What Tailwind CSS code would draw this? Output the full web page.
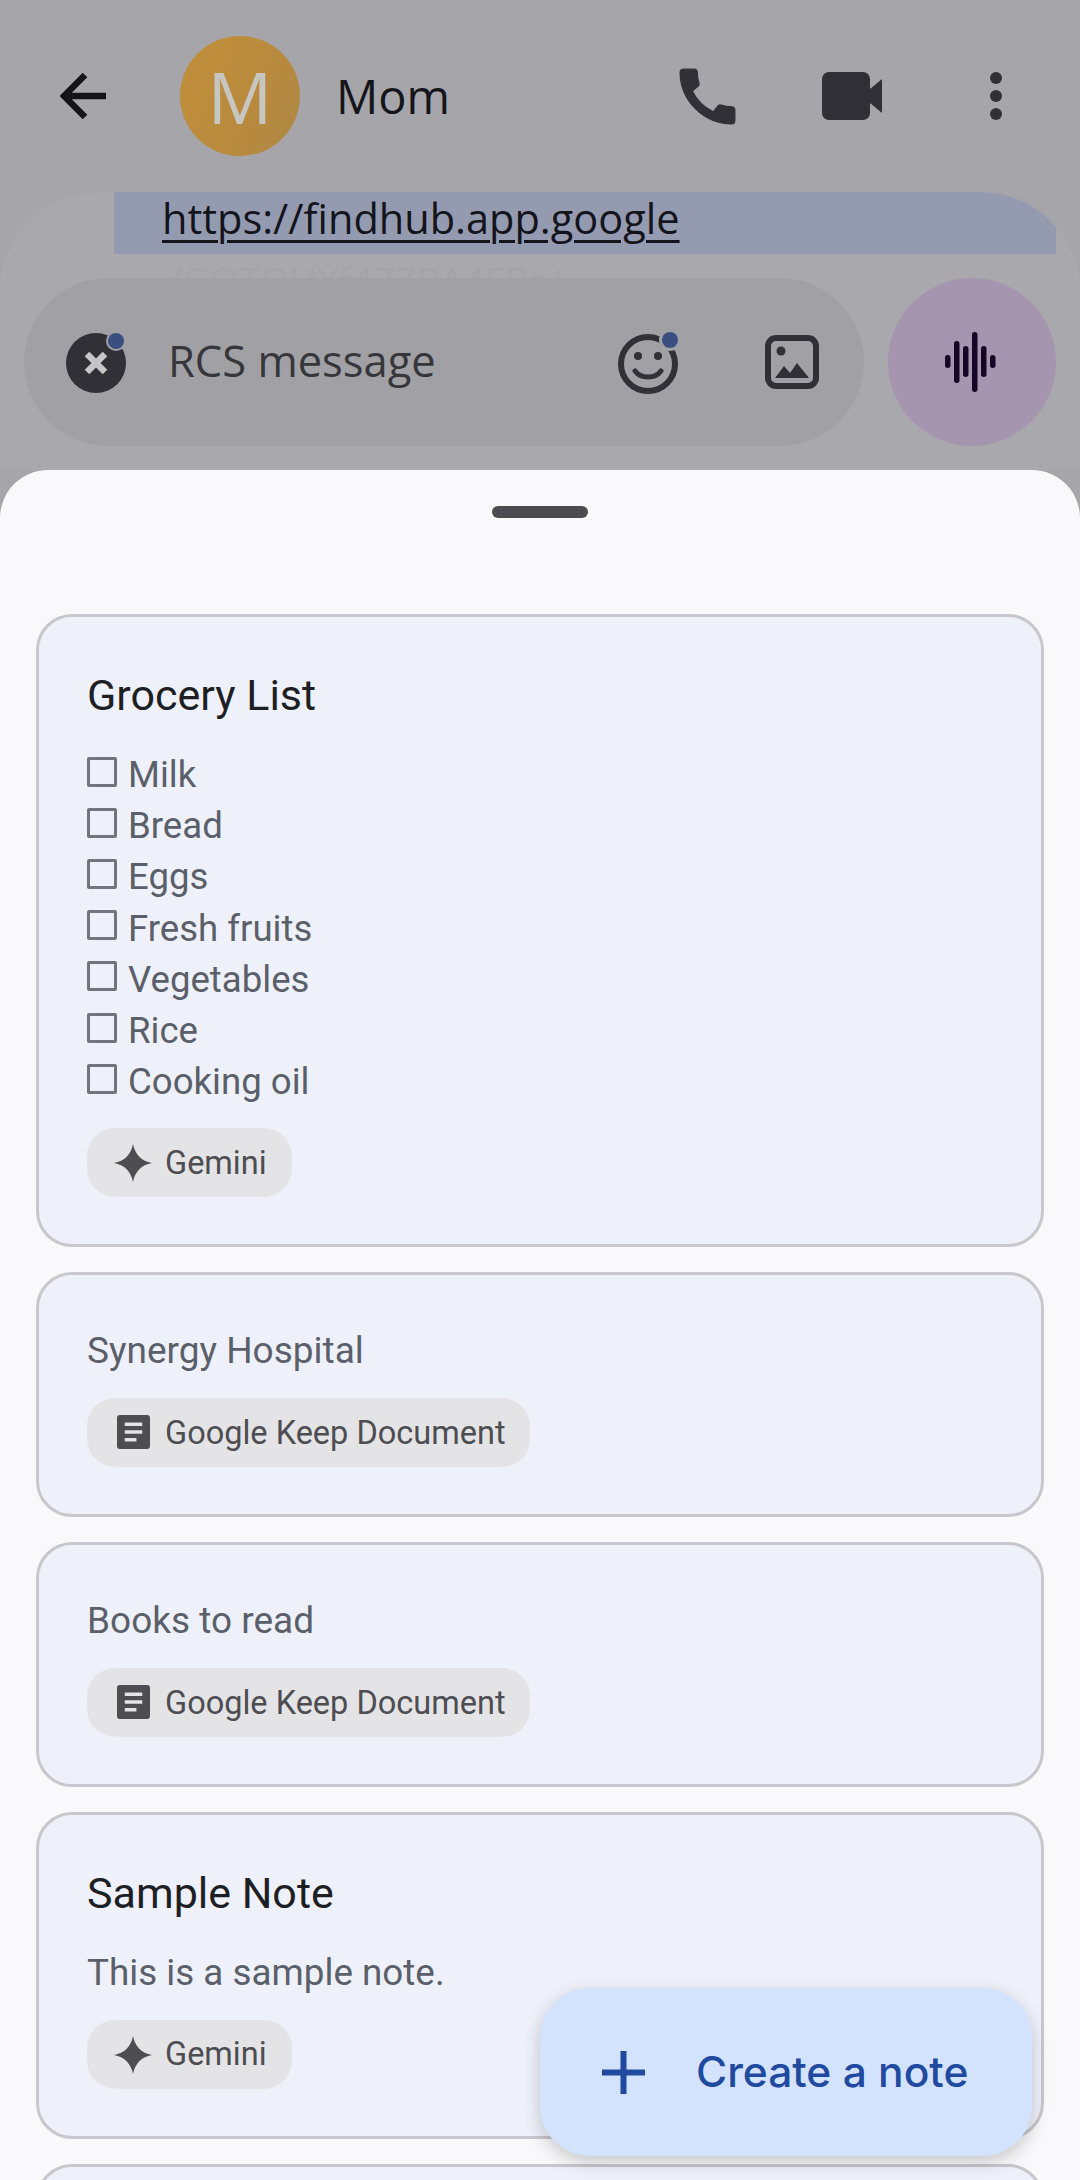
<!DOCTYPE html>
<html>
<head>
<meta charset="utf-8">
<script src="https://cdn.jsdelivr.net/npm/@tailwindcss/browser@4"></script>
</head>
<body class="m-0">
<div class="relative w-[1080px] h-[2180px] overflow-hidden bg-[#a6a6aa] font-['Roboto',sans-serif]">
  <!-- app bar -->
  <header class="flex items-center h-[192px] pl-[60px] pr-[78px]">
    <svg class="w-[46px] h-[48px]" viewBox="0 0 46 48" fill="none" stroke="#141419" stroke-width="6.5"><path d="M46 24H5M25 3 4 24l21 21"/></svg>
    <div class="ml-[74px] w-[120px] h-[120px] rounded-full bg-[linear-gradient(115deg,#c08f3a,#b98a3e_60%,#ad8845)] flex items-center justify-center text-[72px] leading-none text-[#c6c6c2] font-['Open_Sans',sans-serif]">M</div>
    <div class="ml-[36px] flex-1 text-[47px] leading-none text-[#15151a] font-['Open_Sans',sans-serif]">Mom</div>
    <svg class="w-[73px] h-[73px] mr-[78px]" viewBox="0 0 24 24" fill="#303036" stroke="#303036" stroke-width="0.4"><path d="M20.01 15.38c-1.23 0-2.42-.2-3.53-.56-.35-.12-.74-.03-1.01.24l-1.57 1.97c-2.83-1.35-5.48-3.9-6.89-6.83l1.95-1.66c.27-.28.35-.67.24-1.02-.37-1.11-.56-2.3-.56-3.53 0-.54-.45-.99-.99-.99H4.19C3.65 3 3 3.24 3 3.99 3 13.28 10.73 21 20.01 21c.71 0 .99-.63.99-1.18v-3.45c0-.54-.45-.99-.99-.99z"/></svg>
    <svg class="w-[60px] h-[48px] mr-[108px]" viewBox="0 0 60 48" fill="#303036"><rect width="48" height="48" rx="7"/><path d="M48 17 60 7v34L48 31z"/></svg>
    <svg class="w-[12px] h-[48px]" viewBox="0 0 12 48" fill="#303036"><circle cx="6" cy="6" r="6"/><circle cx="6" cy="24" r="6"/><circle cx="6" cy="42" r="6"/></svg>
  </header>
  <!-- message bubble -->
  <div class="h-[278px] rounded-t-[100px] bg-[#a9a9ad] pl-[114px] pr-[24px] overflow-hidden">
    <div class="h-[62px] bg-[#949bb0] pl-[48px] text-[41.500px] leading-[53px] text-[#14141c] font-['Open_Sans',sans-serif]"><span class="underline decoration-[3px] underline-offset-[6px]">https://findhub.app.google</span></div>
    <div class="pl-[54px] text-[38px] leading-[44px] mt-[5px] text-[#a4a4a8] whitespace-nowrap font-['Open_Sans',sans-serif]">/GOTQUYf47ZPA4FRa/</div>
  </div>
  <!-- composer -->
  <div class="flex gap-[24px] px-[24px] -mt-[192px]">
    <div class="w-[840px] h-[168px] rounded-full bg-[#a1a1a5] flex items-center pl-[42px]">
      <svg class="w-[62px] h-[62px] shrink-0" viewBox="0 0 62 62"><circle cx="30" cy="32" r="30" fill="#303036"/><path d="M21 23l18 18M39 23 21 41" stroke="#c6c6c8" stroke-width="6.500"/><circle cx="50" cy="10" r="10" fill="#a1a1a5"/><circle cx="50" cy="10" r="8" fill="#3a4f80"/></svg>
      <div class="ml-[40px] -mt-[2px] flex-1 text-[43.500px] leading-none text-[#36363b] font-['Open_Sans',sans-serif]">RCS message</div>
      <svg class="w-[64px] h-[64px] shrink-0 mr-[83px]" viewBox="0 0 64 64" fill="none"><circle cx="30" cy="34" r="27" stroke="#303036" stroke-width="6"/><circle cx="20" cy="26" r="4" fill="#303036"/><circle cx="40" cy="26" r="4" fill="#303036"/><path d="M17 41c6 8 20 8 26 0" stroke="#303036" stroke-width="5" stroke-linecap="round"/><circle cx="52" cy="10" r="11" fill="#a1a1a5"/><circle cx="52" cy="10" r="8" fill="#3a4f80"/></svg>
      <svg class="w-[54px] h-[54px] shrink-0 mr-[45px]" viewBox="0 0 54 54" fill="none"><rect x="3" y="3" width="48" height="48" rx="8" stroke="#303036" stroke-width="6"/><circle cx="16" cy="16" r="4.500" fill="#303036"/><path d="M10 43l9-12 6 7 7-10 12 15z" fill="#303036"/></svg>
    </div>
    <div class="w-[168px] h-[168px] rounded-full bg-[#a595af] flex items-center justify-center">
      <svg class="w-[51px] h-[60px] mr-[3px]" viewBox="0 0 51 60" fill="#170726"><rect x="0" y="23" width="5.500" height="13" rx="2.700"/><rect x="9" y="9" width="5.500" height="42" rx="2.700"/><rect x="18" y="14" width="5.500" height="31" rx="2.700"/><rect x="27" y="0" width="5.500" height="60" rx="2.700"/><rect x="36" y="14" width="5.500" height="31" rx="2.700"/><rect x="45" y="23" width="5.500" height="13" rx="2.700"/></svg>
    </div>
  </div>
  <!-- bottom sheet -->
  <section class="mt-[24px] h-[1710px] rounded-t-[48px] bg-[#f9f9fb] px-[36px] pt-[36px]">
    <div class="w-[96px] h-[12px] mx-auto rounded-full bg-[#4b4b50]"></div>
    <div class="mt-[96px] flex flex-col gap-[25px]">
      <!-- card 1 -->
      <article class="h-[633px] rounded-[36px] border-[3px] border-[#c8c8cc] bg-[#eff1fa] px-[48px] pt-[55px]">
        <h2 class="text-[43px] leading-[47px] font-normal text-[#1d1f24]">Grocery List</h2>
        <ul class="mt-[30px] text-[36.600px] leading-[51.200px] text-[#5a5f6a]">
          <li class="flex items-center gap-[11px]"><span class="w-[30px] h-[30px] -mt-[6px] rounded-[2px] border-[3px] border-[#72757f]"></span>Milk</li>
          <li class="flex items-center gap-[11px]"><span class="w-[30px] h-[30px] -mt-[6px] rounded-[2px] border-[3px] border-[#72757f]"></span>Bread</li>
          <li class="flex items-center gap-[11px]"><span class="w-[30px] h-[30px] -mt-[6px] rounded-[2px] border-[3px] border-[#72757f]"></span>Eggs</li>
          <li class="flex items-center gap-[11px]"><span class="w-[30px] h-[30px] -mt-[6px] rounded-[2px] border-[3px] border-[#72757f]"></span>Fresh fruits</li>
          <li class="flex items-center gap-[11px]"><span class="w-[30px] h-[30px] -mt-[6px] rounded-[2px] border-[3px] border-[#72757f]"></span>Vegetables</li>
          <li class="flex items-center gap-[11px]"><span class="w-[30px] h-[30px] -mt-[6px] rounded-[2px] border-[3px] border-[#72757f]"></span>Rice</li>
          <li class="flex items-center gap-[11px]"><span class="w-[30px] h-[30px] -mt-[6px] rounded-[2px] border-[3px] border-[#72757f]"></span>Cooking oil</li>
        </ul>
        <div class="mt-[21px] inline-flex items-center h-[69px] pl-[27px] pr-[25px] gap-[13px] rounded-[28px] bg-[#e4e4e6] text-[32.500px] text-[#4d4d52]">
          <svg class="w-[38px] h-[38px]" viewBox="0 0 40 40" fill="#4d4d52"><path d="M20 0c2 11 9 18 20 20-11 2-18 9-20 20-2-11-9-18-20-20 11-2 18-9 20-20z"/></svg>Gemini
        </div>
      </article>
      <!-- card 2 -->
      <article class="h-[245px] rounded-[36px] border-[3px] border-[#c8c8cc] bg-[#eff1fa] px-[48px] pt-[54px]">
        <p class="text-[37px] leading-[43px] text-[#5a5f6a]">Synergy Hospital</p>
        <div class="mt-[26px] inline-flex items-center h-[69px] pl-[30px] pr-[24px] gap-[15px] rounded-[28px] bg-[#e4e4e6] text-[32.500px] text-[#4d4d52]">
          <svg class="w-[33px] h-[34px] -mt-[2px]" viewBox="0 0 34 35"><rect width="34" height="35" rx="3" fill="#4d4d52"/><path d="M8 9.500h18M8 17.500h18M8 25.500h12" stroke="#e4e4e6" stroke-width="3.500"/></svg><span class="mt-[2px]">Google Keep Document</span>
        </div>
      </article>
      <!-- card 3 -->
      <article class="h-[245px] rounded-[36px] border-[3px] border-[#c8c8cc] bg-[#eff1fa] px-[48px] pt-[54px]">
        <p class="text-[37px] leading-[43px] text-[#5a5f6a]">Books to read</p>
        <div class="mt-[26px] inline-flex items-center h-[69px] pl-[30px] pr-[24px] gap-[15px] rounded-[28px] bg-[#e4e4e6] text-[32.500px] text-[#4d4d52]">
          <svg class="w-[33px] h-[34px] -mt-[2px]" viewBox="0 0 34 35"><rect width="34" height="35" rx="3" fill="#4d4d52"/><path d="M8 9.500h18M8 17.500h18M8 25.500h12" stroke="#e4e4e6" stroke-width="3.500"/></svg><span class="mt-[2px]">Google Keep Document</span>
        </div>
      </article>
      <!-- card 4 -->
      <article class="h-[327px] rounded-[36px] border-[3px] border-[#c8c8cc] bg-[#eff1fa] px-[48px] pt-[55px]">
        <h2 class="text-[43px] leading-[47px] font-normal text-[#1d1f24]">Sample Note</h2>
        <p class="mt-[34px] text-[36.800px] leading-[43px] text-[#5a5f6a]">This is a sample note.</p>
        <div class="mt-[26px] inline-flex items-center h-[69px] pl-[27px] pr-[25px] gap-[13px] rounded-[28px] bg-[#e4e4e6] text-[32.500px] text-[#4d4d52]">
          <svg class="w-[38px] h-[38px]" viewBox="0 0 40 40" fill="#4d4d52"><path d="M20 0c2 11 9 18 20 20-11 2-18 9-20 20-2-11-9-18-20-20 11-2 18-9 20-20z"/></svg>Gemini
        </div>
      </article>
      <!-- card 5 -->
      <article class="h-[200px] rounded-[36px] border-[3px] border-[#c8c8cc] bg-[#eff1fa]"></article>
    </div>
  </section>
  <!-- FAB -->
  <button class="absolute left-[540px] top-[1988px] w-[492px] h-[168px] rounded-[50px] bg-[#d3e3fd] shadow-[0_6px_18px_rgba(0,0,0,0.2)] flex items-center pl-[62px] text-[#1f4a9f]">
    <svg class="w-[43px] h-[43px] shrink-0" viewBox="0 0 43 43" fill="none" stroke="#1f4a9f" stroke-width="6"><path d="M0 21.500h43M21.500 0v43"/></svg>
    <span class="ml-[51px] text-[42.500px] leading-none font-medium font-['Inter',sans-serif]">Create a note</span>
  </button>
</div>
</body>
</html>
